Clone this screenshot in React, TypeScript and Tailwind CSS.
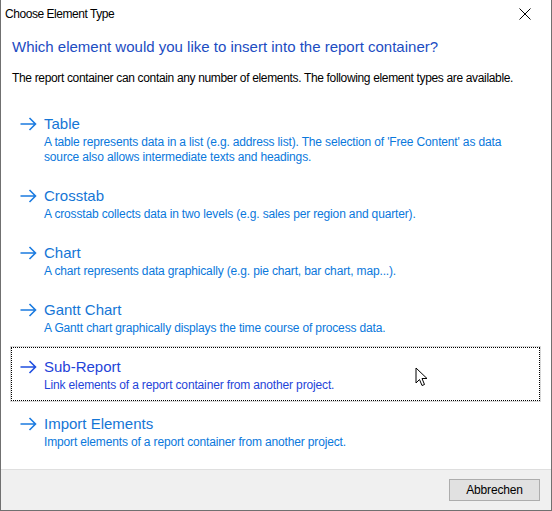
const items = [
  {
    title: "Table",
    desc: "A table represents data in a list (e.g. address list). The selection of 'Free Content' as data source also allows intermediate texts and headings.",
  },
  { title: "Crosstab", desc: "A crosstab collects data in two levels (e.g. sales per region and quarter)." },
  { title: "Chart", desc: "A chart represents data graphically (e.g. pie chart, bar chart, map...)." },
  { title: "Gantt Chart", desc: "A Gantt chart graphically displays the time course of process data." },
  { title: "Sub-Report", desc: "Link elements of a report container from another project.", active: true },
  { title: "Import Elements", desc: "Import elements of a report container from another project." },
];

function Arrow({ color }: { color: string }) {
  return (
    <svg width="17" height="14" viewBox="0 0 17 14" fill="none" className="shrink-0">
      <path d="M0.5 7H15.5M9.5 1L15.5 7L9.5 13" stroke={color} strokeWidth="1.6" />
    </svg>
  );
}

function Cursor() {
  return (
    <svg width="14" height="20" viewBox="0 0 14 20" className="absolute left-[414px] top-[367px]">
      <path
        d="M1 1V16L4.5 12.5L7 18.5L9.5 17.5L7 11.5H12Z"
        fill="#fff"
        stroke="#000"
        strokeWidth="1"
        strokeLinejoin="round"
      />
    </svg>
  );
}

export default function App() {
  return (
    <div
      className="relative w-[552px] h-[511px] bg-white border-x border-b border-[#707070] flex flex-col text-[12px] text-black tracking-[-0.15px]"
      style={{ fontFamily: '"Segoe UI", "Liberation Sans", sans-serif' }}
    >
      {/* title bar */}
      <div className="h-[28px] flex items-center justify-between pl-[4px] pr-[20px]">
        <span className="leading-none tracking-[-0.45px]">Choose Element Type</span>
        <svg width="12" height="12" viewBox="0 0 12 12">
          <path d="M0.5 0.5L11.5 11.5M11.5 0.5L0.5 11.5" stroke="#000" strokeWidth="1" />
        </svg>
      </div>

      <div className="flex-1 pl-[10px] pr-[11px]">
        <h1 className="text-[15px] leading-[20px] text-[#1c4cc2] mt-[9px] pl-[1px] tracking-normal">
          Which element would you like to insert into the report container?
        </h1>
        <p className="mt-[14px] pl-[1px] leading-[15px] whitespace-nowrap tracking-[-0.34px]">
          The report container can contain any number of elements. The following element types are available.
        </p>

        <div className="mt-[18px] flex flex-col gap-[3px]">
          {items.map((it) => (
            <div
              key={it.title}
              className={
                it.active
                  ? "border border-dotted border-black outline outline-1 outline-[#d9d9d9] pl-[8px] pr-[30px] pt-[8px] pb-[7px] flex gap-[7px]"
                  : "border border-transparent pl-[8px] pr-[30px] pt-[8px] pb-[7px] flex gap-[7px]"
              }
            >
              <div className="h-[22px] flex items-center">
                <Arrow color={it.active ? "#1f4fe0" : "#1b7be0"} />
              </div>
              <div className="flex flex-col">
                <div
                  className={
                    it.active
                      ? "text-[15px] leading-[22px] text-[#1f44d9] tracking-normal"
                      : "text-[15px] leading-[22px] text-[#1576d6] tracking-normal"
                  }
                >
                  {it.title}
                </div>
                <div
                  className={
                    it.active ? "leading-[15px] text-[#1f44d9]" : "leading-[15px] text-[#0a78dc]"
                  }
                >
                  {it.desc}
                </div>
              </div>
            </div>
          ))}
        </div>
      </div>

      {/* footer */}
      <div className="h-[41px] bg-[#f0f0f0] border-t border-[#dfdfdf] flex items-center justify-end pr-[11px]">
        <button className="w-[91px] h-[22px] bg-[#e1e1e1] border border-[#adadad] leading-none">
          Abbrechen
        </button>
      </div>

      <Cursor />
    </div>
  );
}
